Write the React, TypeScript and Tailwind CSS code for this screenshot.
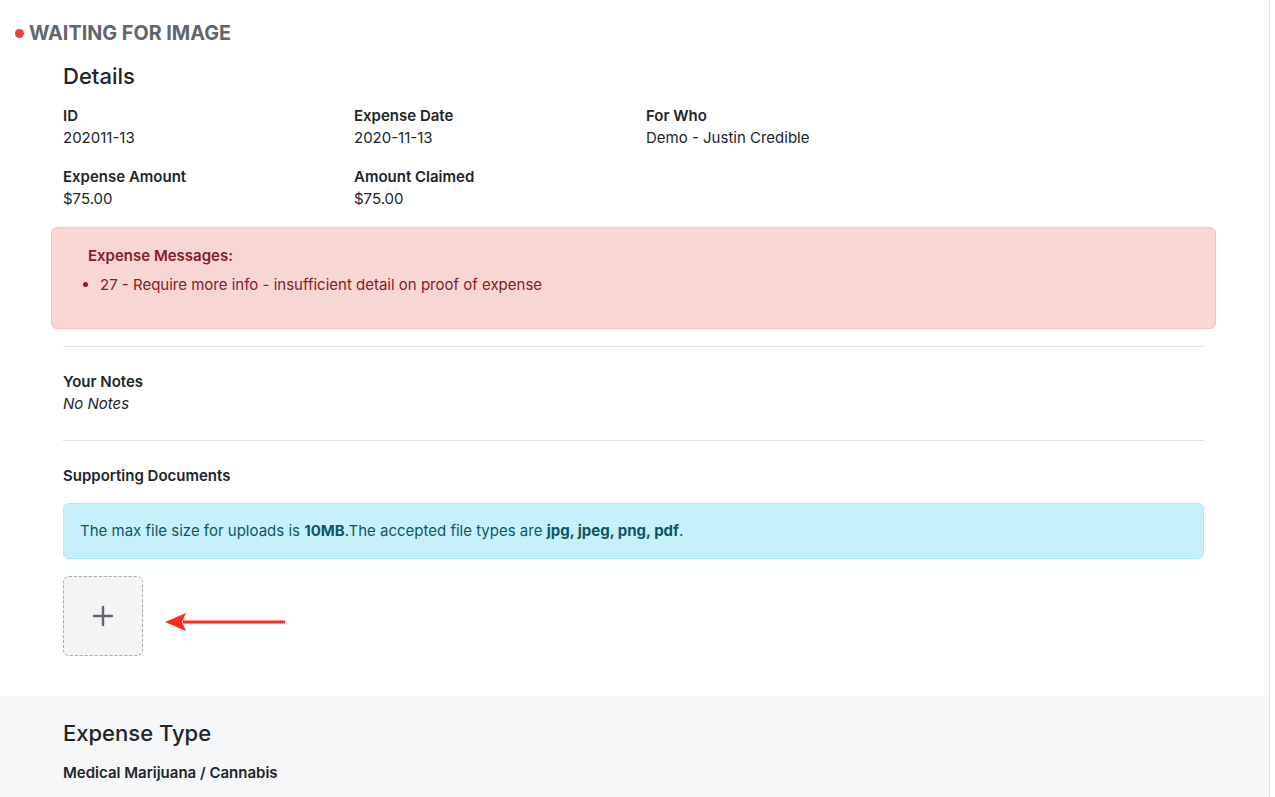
import React from "react";

function Field({ label, value }: { label: string; value: string }) {
  return (
    <div>
      <div className="text-[15px] leading-[22px] font-semibold text-[#212529]">{label}</div>
      <div className="text-[15px] leading-[22px] text-[#212529]">{value}</div>
    </div>
  );
}

export default function App() {
  return (
    <div className="min-h-[797px] w-[1270px] border-r border-[#e4e4e4] bg-white font-['Inter','Liberation_Sans',sans-serif] text-[#212529]">
      <div className="flex items-center pl-[15px] pt-[21px]">
        <span className="mr-[5px] h-[9px] w-[9px] rounded-full bg-[#e8423a]" />
        <span className="text-[19.8px] leading-[24px] font-bold text-[#5f666d]">WAITING FOR IMAGE</span>
      </div>

      <div className="px-[63px] pr-[65px]">
        <h2 className="mt-[16px] text-[22px] leading-[30px] font-medium">Details</h2>

        <div className="mt-[14px] grid grid-cols-[291px_292px_1fr] gap-y-[17px]">
          <Field label="ID" value="202011-13" />
          <Field label="Expense Date" value="2020-11-13" />
          <Field label="For Who" value="Demo - Justin Credible" />
          <Field label="Expense Amount" value="$75.00" />
          <Field label="Amount Claimed" value="$75.00" />
        </div>

        <div className="-mx-[12px] mt-[17px] h-[102px] rounded-[6px] border border-[#f3c2c2] bg-[#f8d6d4] pl-[36px] pt-[17px] text-[#842029]">
          <div className="text-[15px] leading-[22px] font-semibold">Expense Messages:</div>
          <ul className="mt-[7px] list-disc pl-[12px] text-[15px] leading-[22px]">
            <li>27 - Require more info - insufficient detail on proof of expense</li>
          </ul>
        </div>

        <div className="mt-[17px] h-px bg-[#dcdfe2]" />

        <div className="pt-[24px]">
          <div className="text-[15px] leading-[22px] font-semibold">Your Notes</div>
          <div className="text-[15px] leading-[22px] italic">No Notes</div>
        </div>

        <div className="mt-[25px] h-px bg-[#dcdfe2]" />

        <div className="mt-[24px] text-[15px] leading-[22px] font-semibold">Supporting Documents</div>

        <div className="mt-[16px] flex h-[56px] items-center rounded-[6px] border border-[#aeeaf6] bg-[#c7f1fa] pl-[16px] text-[15px] text-[#0f5565]">
          <span>
            The max file size for uploads is <b className="font-bold">10MB</b>.The accepted file types are{" "}
            <b className="font-bold">jpg, jpeg, png, pdf</b>.
          </span>
        </div>

        <div className="mt-[17px] flex items-center">
          <div className="flex h-[80px] w-[80px] items-center justify-center rounded-[6px] border border-dashed border-[#a9a9a9] bg-[#f4f4f4]">
            <svg width="22" height="22" viewBox="0 0 22 22">
              <path d="M11 2v18M2 11h18" stroke="#5f666d" strokeWidth="2.4" strokeLinecap="round" />
            </svg>
          </div>
          <svg className="ml-[22px] mt-[12px]" width="122" height="22" viewBox="0 0 122 22">
            <path d="M18 11H120" stroke="#ff2a20" strokeWidth="3" />
            <path d="M0 11L21 2L17 11L21 20Z" fill="#ff2a20" />
          </svg>
        </div>
      </div>

      <div className="mt-[40px] min-h-[101px] bg-[#f6f7f9] px-[63px] pt-[22px]">
        <h2 className="text-[22px] leading-[30px] font-medium">Expense Type</h2>
        <div className="mt-[14px] text-[15px] leading-[22px] font-semibold">Medical Marijuana / Cannabis</div>
      </div>
    </div>
  );
}
